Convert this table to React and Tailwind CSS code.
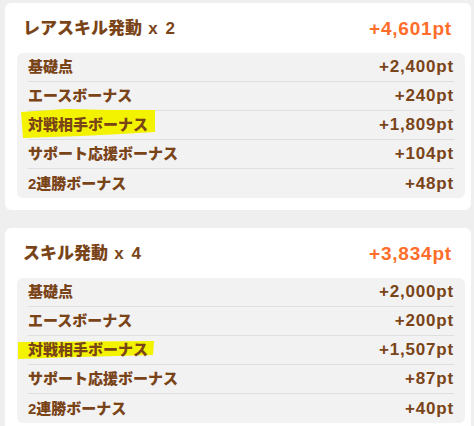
import React from 'react';

const BROWN = "#7a4419";
const ORANGE = "#ff6d2a";

const cards = [
  {
    title: 'レアスキル発動',
    count: 2,
    total: '+4,601pt',
    hl: 'tall',
    rows: [
      ['基礎点', '+2,400pt'],
      ['エースボーナス', '+240pt'],
      ['対戦相手ボーナス', '+1,809pt', true],
      ['サポート応援ボーナス', '+104pt'],
      ['2連勝ボーナス', '+48pt'],
    ],
  },
  {
    title: 'スキル発動',
    count: 4,
    total: '+3,834pt',
    hl: 'short',
    rows: [
      ['基礎点', '+2,000pt'],
      ['エースボーナス', '+200pt'],
      ['対戦相手ボーナス', '+1,507pt', true],
      ['サポート応援ボーナス', '+87pt'],
      ['2連勝ボーナス', '+40pt'],
    ],
  },
];

// marker stroke behind the label
const Marker = ({ kind }) =>
  kind === 'tall' ? (
    <svg className="absolute -left-[7px] -top-[6px]" width="134" height="29" viewBox="0 0 134 29">
      <polygon points="0,3 30,1 45,0 90,1 134,1 134,23 100,25 60,27 30,28 2,29" fill="#f3f300" />
    </svg>
  ) : (
    <svg className="absolute -left-[10px] top-[1px]" width="136" height="18" viewBox="0 0 136 18">
      <polygon points="0,1 136,0 135,14 60,16 0,18" fill="#f3f300" />
    </svg>
  );

const Row = ({ label, value, marked, hl }) => (
  <div className="mx-[11px] h-[29px] flex items-center justify-between border-b border-[#dfdfdf] last:border-b-0">
    <span className="relative inline-block text-[15px] leading-[20px]">
      {marked && <Marker kind={hl} />}
      <span className="relative">{label}</span>
    </span>
    <span className="text-[17px] leading-[20px] tracking-[0.8px]">{value}</span>
  </div>
);

const Card = ({ title, count, total, rows, hl }) => (
  <div className="bg-white rounded-[6px] pl-3 pr-[6px] pb-3">
    <div className="h-[50px] flex items-center justify-between pl-[6px] pr-[13px]">
      <span className="text-[17px] leading-none">
        {title}
        <span className="tracking-[1.5px]"> x {count}</span>
      </span>
      <span className="text-[19px] leading-none tracking-[0.8px]" style={{ color: ORANGE }}>{total}</span>
    </div>
    <div className="bg-[#f2f2f2] rounded-[6px]">
      {rows.map(([label, value, marked]) => (
        <Row key={label} label={label} value={value} marked={marked} hl={hl} />
      ))}
    </div>
  </div>
);

export default function App() {
  return (
    <div
      className="min-h-screen bg-[#efefef] pt-[3px] pl-[5px] pr-[3px] flex flex-col gap-[18px] font-black font-['Liberation_Sans','Noto_Sans_CJK_JP',sans-serif]"
      style={{ color: BROWN }}
    >
      {cards.map((c) => (
        <Card key={c.title} {...c} />
      ))}
    </div>
  );
}
